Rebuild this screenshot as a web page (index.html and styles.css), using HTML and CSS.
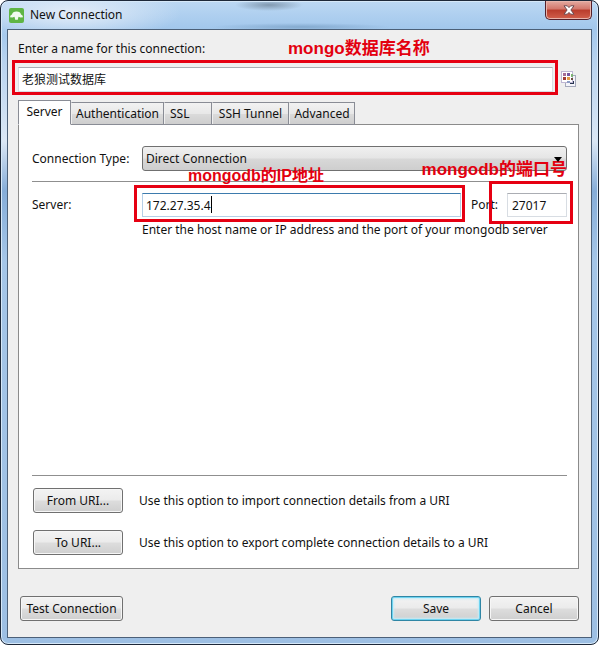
FILE: index.html
```html
<!DOCTYPE html>
<html lang="en">
<head>
<meta charset="utf-8">
<meta name="viewport" content="width=device-width, initial-scale=1">
<title>New Connection</title>
<link rel="stylesheet" href="styles.css">
</head>
<body>
<div class="window">
  <header class="titlebar">
    <svg class="app-icon" width="15" height="15" viewBox="0 0 15 15" aria-hidden="true">
      <rect width="15" height="15" rx="2" fill="#5fb544"/>
      <path d="M1 9.300Q1 7 3 6.600Q3.500 3.600 7.500 3.500Q11.500 3.600 12 6.600Q14 7 14 9.300L11.500 9.500L9.500 8.800L8.800 11.800H6.200L5.500 8.800L3.500 9.500Z" fill="#f2faef"/>
    </svg>
    <h1 class="title">New Connection</h1>
    <button class="close" type="button" aria-label="Close">
      <svg width="12" height="10" viewBox="0 0 12 10" aria-hidden="true">
        <path d="M1 .8H4.300L6 2.600L7.700 .8H11L7.900 5L11 9.200H7.700L6 7.400L4.300 9.200H1L4.100 5Z" fill="#fff" stroke="#6e4a50" stroke-width="1"/>
      </svg>
    </button>
  </header>

  <form class="content">
    <div class="name-head">
      <label for="name">Enter a name for this connection:</label>
      <span class="note note-large note-name">mongo数据库名称</span>
    </div>
    <div class="name-row">
      <div class="marked mark-name">
        <input class="field name-field" id="name" type="text" value="老狼测试数据库">
      </div>
      <button class="color-button" type="button" aria-label="Choose color">
        <svg width="15" height="17" viewBox="0 0 15 17" aria-hidden="true">
          <rect x="4.500" y="4.500" width="10" height="11" fill="#f4f4fa" stroke="#a5a9bb"/>
          <path d="M9 10h4v3H9z" fill="#273550"/>
          <rect x=".5" y=".5" width="11" height="11" fill="#fff" stroke="#bfb7d4"/>
          <path d="M2 2h3v3H2z" fill="#a66d96"/><path d="M6 2h3v3H6z" fill="#7757a0"/>
          <path d="M2 6h3v3H2z" fill="#a13b35"/><path d="M6 6h3v3H6z" fill="#e59a45"/>
          <path d="M10 3h2v3h-2z" fill="#7eb476"/><path d="M10 7h2v2h-2z" fill="#6d4b42"/>
          <path d="M6 10h3v2H6z" fill="#8d9dc4"/>
        </svg>
      </button>
    </div>

    <div class="tabs" role="tablist">
      <button class="tab active" type="button" role="tab" aria-selected="true">Server</button>
      <button class="tab" type="button" role="tab">Authentication</button>
      <button class="tab tab-start" type="button" role="tab">SSL</button>
      <button class="tab" type="button" role="tab">SSH Tunnel</button>
      <button class="tab" type="button" role="tab">Advanced</button>
    </div>

    <section class="panel" role="tabpanel">
      <div class="row">
        <label class="row-label" for="type">Connection Type:</label>
        <div class="select-wrap">
          <select class="select" id="type"><option>Direct Connection</option></select>
          <span class="note note-large note-port">mongodb的端口号</span>
        </div>
      </div>
      <hr class="rule">
      <div class="row server-row">
        <label class="row-label" for="server">Server:</label>
        <div class="marked mark-server">
          <input class="field focused" id="server" type="text" value="172.27.35.4">
          <span class="caret-line" aria-hidden="true"><span class="typed">172.27.35.4</span></span>
          <span class="note note-server">mongodb的IP地址</span>
        </div>
        <label class="port-label" for="port">Port:</label>
        <div class="marked mark-port">
          <input class="field" id="port" type="text" value="27017">
        </div>
      </div>
      <p class="hint">Enter the host name or IP address and the port of your mongodb server</p>
      <hr class="rule rule-bottom">
      <div class="uri-list">
        <div class="uri-row">
          <button class="button" type="button">From URI...</button>
          <span>Use this option to import connection details from a URI</span>
        </div>
        <div class="uri-row">
          <button class="button" type="button">To URI...</button>
          <span>Use this option to export complete connection details to a URI</span>
        </div>
      </div>
    </section>

    <footer class="actions">
      <button class="button test" type="button">Test Connection</button>
      <button class="button primary" type="submit">Save</button>
      <button class="button" type="button">Cancel</button>
    </footer>
  </form>
</div>
</body>
</html>
```
FILE: styles.css
```css
* { box-sizing: border-box; }

body {
  margin: 0;
  background: #fff;
  color: #111;
  font: 12px/18px "Noto Sans", "Noto Sans CJK SC", sans-serif;
}

button, input, select { font: inherit; color: inherit; margin: 0; }

.window {
  display: flex;
  flex-direction: column;
  min-height: 100vh;
  padding: 0 6px 6px;
  border: 1px solid #1d2839;
  border-radius: 8px;
  background:
    radial-gradient(ellipse 34px 6px at 268px 4px, #8199b0, transparent),
    radial-gradient(ellipse 90px 4px at 300px 26px, #84aacf, transparent),
    radial-gradient(ellipse 110px 28px at 70px 12px, #e4edf8, transparent),
    linear-gradient(#bcd8f3, #a2c7ec 28px, #b8d3ef 60px, #dbe7f5 140px, #86add8 190px, #a5c6e8 260px, #9dbfe3 100%);
  box-shadow: inset 0 0 0 1px #d6e8f8;
}

.titlebar {
  display: flex;
  align-items: flex-start;
  height: 28px;
  padding-left: 2px;
}

.app-icon { margin-top: 7px; }

.title {
  flex: 1;
  margin: 5px 0 0 6px;
  font-size: 12px;
  font-weight: 400;
}

.close {
  display: flex;
  align-items: center;
  justify-content: center;
  width: 47px;
  height: 19px;
  padding: 0;
  border: 1px solid #54202a;
  border-top: 0;
  border-radius: 0 0 5px 5px;
  background: linear-gradient(#e4aaa1, #d3766a 45%, #b93c2c 50%, #d1604c);
  box-shadow: inset 0 0 0 1px #e8b4ab;
}

.content {
  flex: 1;
  display: flex;
  flex-direction: column;
  padding: 10px 12px 16px 10px;
  border: 1px solid #4c6078;
  background: #efefef;
}

.name-head { position: relative; }

.note {
  position: absolute;
  color: #e3000f;
  font: bold 16px/20px "Liberation Sans", "Noto Sans CJK SC", sans-serif;
  white-space: nowrap;
}

.note-large { font-size: 17px; }
.note-name { left: 270px; top: -1px; }
.note-server { left: 46px; top: -27px; }
.note-port { right: 0; top: 14px; }

.name-row {
  display: flex;
  align-items: center;
  margin-top: 9px;
}

.marked { position: relative; }

.marked::after {
  content: "";
  position: absolute;
  border: 3px solid #e60012;
  pointer-events: none;
}

.mark-name { flex: 1; }
.mark-name::after { inset: -7px -5px -3px -6px; }
.mark-server { flex: 1; }
.mark-server::after { inset: -8px -4px -5px -8px; }
.mark-port { width: 60px; }
.mark-port::after { inset: -12px -6px -7px -18px; }

.field {
  display: block;
  width: 100%;
  height: 24px;
  padding: 0 4px;
  border: 1px solid #d8dde3;
  border-top-color: #abadb3;
  background: #fff;
  outline: 0;
}

.name-field { height: 25px; padding: 0 3px 2px; }

.focused {
  padding: 0 3px;
  border-color: #b5cfe7;
  border-top-color: #3d7bad;
}

.caret-line {
  position: absolute;
  inset: 3px 4px;
  pointer-events: none;
}

.typed {
  display: inline-block;
  height: 17px;
  border-right: 1px solid #000;
  color: transparent;
}

.color-button {
  display: flex;
  width: 18px;
  margin-left: 8px;
  padding: 0 3px 0 0;
  border: 0;
  background: none;
}

.tabs {
  display: grid;
  grid-template-columns: 53px 93px 48px 77px 66px;
  align-items: end;
  height: 25px;
  margin: 8px 0 -1px;
}

.tab {
  position: relative;
  height: 23px;
  padding: 0;
  border: 1px solid #898c95;
  border-left-color: transparent;
  background: linear-gradient(#f2f2f2, #e8e8e8 50%, #dbdbdb 51%, #cecece);
  background-clip: padding-box;
  white-space: nowrap;
}

.tab-start { padding-left: 5px; text-align: left; }

.tab.active {
  height: 25px;
  padding-bottom: 1px;
  border-left-color: #898c95;
  border-bottom-color: #fff;
  background: #fff;
  z-index: 1;
}

.panel {
  flex: 1;
  display: flex;
  flex-direction: column;
  padding: 21px 11px 13px 13px;
  border: 1px solid #8b8b8b;
  background: #fff;
}

.row { display: flex; align-items: center; }

.row-label { width: 110px; flex: none; }

.select-wrap { position: relative; flex: 1; }

.select-wrap::after {
  content: "";
  position: absolute;
  right: 5px;
  top: 11px;
  border: 4px solid transparent;
  border-top: 5px solid #000;
  border-bottom: 0;
  pointer-events: none;
}

.select {
  display: block;
  width: 100%;
  height: 25px;
  padding: 0 3px;
  border: 1px solid #707070;
  border-radius: 3px;
  appearance: none;
  background: linear-gradient(#f0f0f0, #e5e5e5 48%, #d8d8d8 52%, #cecece);
}

.rule {
  width: 100%;
  height: 1px;
  margin: 10px 0 0;
  border: 0;
  background: #8f8f8f;
}

.server-row { margin-top: 11px; }

.port-label { width: 46px; flex: none; padding-left: 10px; }

.hint { margin: 4px 0 0 110px; white-space: nowrap; }

.rule-bottom { margin-top: auto; }

.uri-list {
  display: grid;
  gap: 17px;
  margin: 12px 0 0 1px;
}

.uri-row { display: flex; align-items: center; gap: 16px; }

.button {
  width: 90px;
  height: 25px;
  padding: 0;
  border: 1px solid #707070;
  border-radius: 3px;
  background: linear-gradient(#f3f3f3, #ebebeb 48%, #dddddd 52%, #cfcfcf);
  box-shadow: inset 0 0 0 1px #f6f6f6;
  white-space: nowrap;
}

.actions {
  display: flex;
  gap: 8px;
  margin: 27px 0 0 2px;
}

.test { width: 103px; margin-right: auto; }

.primary {
  border-color: #2f86a5;
  box-shadow: inset 0 0 0 1px #6fd3f0, inset 0 0 2px 2px #c5ecf7;
}
```
